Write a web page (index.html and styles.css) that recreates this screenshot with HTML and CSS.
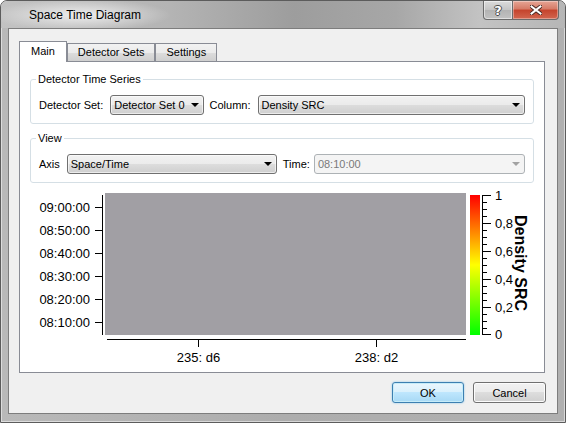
FILE: index.html
```html
<!DOCTYPE html>
<html lang="en">
<head>
  <meta charset="UTF-8" />
  <title>Space Time Diagram</title>
  <link rel="stylesheet" href="styles.css">
</head>
<body>

<div class="window">
  <div class="titlebar">
    <span class="title">Space Time Diagram</span>
    <div class="caption-buttons">
      <button class="cap-btn cap-help">?</button>
      <button class="cap-btn cap-close">
        <svg width="12" height="10" viewBox="0 0 12 10">
          <path d="M1.5 1.5 L10.5 8.5 M10.5 1.5 L1.5 8.5" stroke="#4a2a24" stroke-width="4" stroke-linecap="square"/>
          <path d="M1.5 1.5 L10.5 8.5 M10.5 1.5 L1.5 8.5" stroke="#fff" stroke-width="2" stroke-linecap="square"/>
        </svg>
      </button>
    </div>
  </div>

  <div class="client">
    <div class="tabs">
      <div class="tab active">Main</div>
      <div class="tab">Detector Sets</div>
      <div class="tab">Settings</div>
    </div>

    <div class="pane">
      <fieldset class="group">
        <legend>Detector Time Series</legend>
        <div class="row">
          <label>Detector Set:</label>
          <div class="combo">Detector Set 0</div>
          <label>Column:</label>
          <div class="combo grow">Density SRC</div>
        </div>
      </fieldset>

      <fieldset class="group">
        <legend>View</legend>
        <div class="row">
          <label>Axis</label>
          <div class="combo combo-axis">Space/Time</div>
          <label class="time-label">Time:</label>
          <div class="combo grow disabled">08:10:00</div>
        </div>
      </fieldset>

      <!-- time over detectors, colour scale on the right -->
      <svg class="chart" width="504" height="189" viewBox="0 0 504 189">
        <defs>
          <linearGradient id="scale" x1="0" y1="1" x2="0" y2="0">
            <stop offset="0" stop-color="#00ff00"/>
            <stop offset="0.5" stop-color="#ffff00"/>
            <stop offset="1" stop-color="#ff0000"/>
          </linearGradient>
        </defs>

        <rect x="75" y="10" width="361" height="142" fill="#a19fa4"/>
        <rect x="440" y="12" width="10" height="140" fill="url(#scale)"/>

        <g stroke="#000" stroke-width="1" fill="none">
          <path d="M72.5 12 V152"/>
          <path d="M65 24.5 H72 M65 47.5 H72 M65 70.5 H72 M65 93.5 H72 M65 116.5 H72 M65 139.5 H72"/>
          <path d="M77 156.5 H436 M168.5 156.5 V164 M346.5 156.5 V164"/>
          <path d="M452.5 12 V152"/>
          <path d="M452 12.5 H461 M452 40.5 H461 M452 68.5 H461 M452 96.5 H461 M452 124.5 H461 M452 151.5 H461"/>
          <path d="M452 19.5 H457 M452 26.5 H457 M452 33.5 H457
                   M452 47.5 H457 M452 54.5 H457 M452 61.5 H457
                   M452 75.5 H457 M452 82.5 H457 M452 89.5 H457
                   M452 103.5 H457 M452 110.5 H457 M452 117.5 H457
                   M452 131.5 H457 M452 138.5 H457 M452 145.5 H457"/>
        </g>

        <g class="axis-text" text-anchor="end">
          <text x="60" y="29">09:00:00</text>
          <text x="60" y="52">08:50:00</text>
          <text x="60" y="75">08:40:00</text>
          <text x="60" y="98">08:30:00</text>
          <text x="60" y="121">08:20:00</text>
          <text x="60" y="144">08:10:00</text>
        </g>

        <g class="axis-text" text-anchor="middle">
          <text x="168.5" y="179">235: d6</text>
          <text x="346.5" y="179">238: d2</text>
        </g>

        <g class="axis-text">
          <text x="465" y="17">1</text>
          <text x="465" y="45">0,8</text>
          <text x="465" y="73">0,6</text>
          <text x="465" y="101">0,4</text>
          <text x="465" y="129">0,2</text>
          <text x="465" y="156">0</text>
        </g>

        <text class="scale-title" x="485" y="80" text-anchor="middle" transform="rotate(90 485 80)">Density SRC</text>
      </svg>
    </div>

    <div class="actions">
      <button class="btn default">OK</button>
      <button class="btn">Cancel</button>
    </div>
  </div>
</div>

</body>
</html>
```

FILE: styles.css
```css
* {
  box-sizing: border-box;
}

body {
  margin: 0;
  background: #fff;
  font-family: "Liberation Sans", Arial, sans-serif;
  font-size: 11px;
  color: #000;
}

.window {
  width: 566px;
  height: 423px;
  display: flex;
  flex-direction: column;
  border: 1px solid #5c5c5c;
  border-radius: 7px 7px 0 0;
  background: linear-gradient(to right, #b9b9b9, #adadad 50%, #b0b0b0);
  box-shadow: inset 0 0 0 1px rgba(255,255,255,0.5);
  overflow: hidden;
}

/* caption */
.titlebar {
  height: 27px;
  flex-shrink: 0;
  display: flex;
  align-items: flex-start;
  background:
    radial-gradient(ellipse 90px 16px at 80px 14px, rgba(255,255,255,0.75), rgba(255,255,255,0) 100%),
    linear-gradient(to right, #c2c2c2 0%, #b4b4b4 30%, #9d9d9d 52%, #a7a7a7 70%, #c3c3c3 85%, #b6b6b6 100%);
}

.title {
  padding: 7px 0 0 28px;
  font-size: 12px;
  line-height: 14px;
  color: #000;
}

.caption-buttons {
  margin-left: auto;
  margin-right: 6px;
  display: flex;
}

.cap-btn {
  height: 19px;
  margin: 0;
  padding: 0;
  border: 1px solid #6b6b6b;
  border-top: none;
  display: flex;
  align-items: center;
  justify-content: center;
}

.cap-help {
  width: 30px;
  border-radius: 0 0 0 4px;
  background: linear-gradient(#dcdcdc, #c4c4c4 50%, #b3b3b3 50%, #c2c2c2);
  box-shadow: inset 0 0 0 1px rgba(255,255,255,0.5);
  font: bold 13px "DejaVu Sans", sans-serif;
  color: #fff;
  text-shadow: 1px 0 0 #4b4b4b, -1px 0 0 #4b4b4b, 0 1px 0 #4b4b4b, 0 -1px 0 #4b4b4b;
}

.cap-close {
  width: 46px;
  border-left: none;
  border-radius: 0 0 4px 0;
  background: linear-gradient(#e6a595, #d57a66 45%, #c5432c 50%, #d2664f);
  box-shadow: inset 0 0 0 1px rgba(255,255,255,0.35);
}

/* client area */
.client {
  flex: 1;
  margin: 0 7px 8px;
  display: flex;
  flex-direction: column;
  padding: 12px 11px 10px 10px;
  background: #f0f0f0;
  border: 1px solid #7d7d7d;
}

.tabs {
  height: 20px;
  display: flex;
  align-items: flex-end;
}

.tab {
  height: 18px;
  padding: 0 10px;
  line-height: 17px;
  border: 1px solid #898c95;
  border-bottom: none;
  background: linear-gradient(#f2f2f2, #ebebeb 50%, #dddddd 50%, #cfcfcf);
}

.tab.active {
  height: 21px;
  margin-bottom: -1px;
  position: relative;
  z-index: 1;
  padding: 0 11px;
  line-height: 19px;
  background: #fff;
}

.pane {
  height: 312px;
  margin-right: 1px;
  padding: 11px 10px 0;
  background: #fff;
  border: 1px solid #898c95;
}

.group {
  margin: 0;
  padding: 9px 8px 8px 8px;
  border: 1px solid #d5dfe5;
  border-radius: 3px;
}

.group + .group {
  margin-top: 8px;
}

.group legend {
  padding: 0 2px;
  margin-left: -3px;
  line-height: 13px;
}

.row {
  height: 20px;
  display: flex;
  align-items: center;
  gap: 6px;
}

.row label {
  margin-right: 1px;
}

.row .time-label {
  margin-right: -2px;
}

.combo {
  height: 20px;
  display: flex;
  align-items: center;
  justify-content: space-between;
  gap: 6px;
  padding: 0 4px 0 3px;
  border: 1px solid #707070;
  border-radius: 3px;
  background: linear-gradient(#f2f2f2, #ebebeb 50%, #dddddd 50%, #cfcfcf);
  box-shadow: inset 0 0 0 1px rgba(255,255,255,0.6);
}

.combo::after {
  content: "";
  border-left: 4px solid transparent;
  border-right: 4px solid transparent;
  border-top: 4px solid #000;
}

.combo.grow {
  flex: 1;
}

.combo-axis {
  width: 210px;
}

.combo.disabled {
  color: #7a7a7a;
  border-color: #adb2b5;
  background: #f4f4f4;
  box-shadow: none;
}

.combo.disabled::after {
  border-top-color: #a2a2a2;
}

.chart {
  display: block;
}

.axis-text {
  font-family: "Liberation Sans", Arial, sans-serif;
  font-size: 13px;
  fill: #000;
}

.scale-title {
  font-family: "Liberation Sans", Arial, sans-serif;
  font-size: 16px;
  font-weight: bold;
  fill: #000;
}

/* dialog buttons */
.actions {
  margin-top: 9px;
  display: flex;
  justify-content: flex-end;
  gap: 9px;
}

.btn {
  width: 73px;
  height: 21px;
  padding: 0;
  font: 11px "Liberation Sans", Arial, sans-serif;
  color: #000;
  border: 1px solid #707070;
  border-radius: 3px;
  background: linear-gradient(#f2f2f2, #ebebeb 50%, #dddddd 50%, #cfcfcf);
  box-shadow: inset 0 0 0 1px #fcfcfc;
}

.btn.default {
  width: 72px;
  border-color: #3c7fb1;
  background: linear-gradient(#eaf6fd, #d9f0fc 50%, #bee6fd 50%, #a7d9f5);
  box-shadow: inset 0 0 0 1px #c6ecf9, 0 0 2px #7ec2e9;
}
```
